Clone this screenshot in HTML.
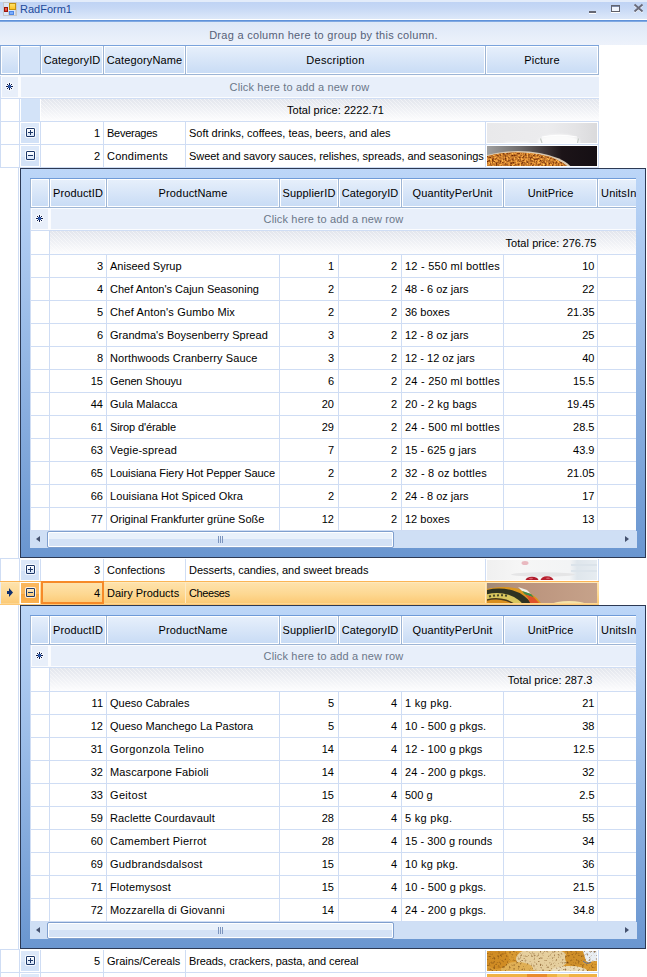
<!DOCTYPE html><html><head><meta charset="utf-8"><title>RadForm1</title><style>
*{box-sizing:border-box;margin:0;padding:0}
html,body{width:647px;height:977px;overflow:hidden;background:#fff}
body{position:relative;font-family:"Liberation Sans",sans-serif;font-size:11px;color:#000;line-height:13px}
.a{position:absolute}
.t{position:absolute;white-space:nowrap;height:13px;line-height:13px}
.r{text-align:right}
.c{text-align:center}
.title{left:0;top:0;width:647px;height:20px;background:linear-gradient(#e3ecfa 0,#e3ecfa 2px,#bfd3f4 2px,#c6d8f5 8px,#dde8f9 19px,#fff 19px,#fff 20px)}
.tline{left:0;top:20px;width:647px;height:2px;background:linear-gradient(#5f92d9 0,#5f92d9 1px,#80a9e2 1px,#80a9e2 2px)}
.gp{left:0;top:22px;width:647px;height:23px;background:linear-gradient(#dde8f7,#edf2fb)}
.hc{position:absolute;background:linear-gradient(#e6effb,#c9dcf5);border:1px solid #fff}
.hl{position:absolute;background:#9db5d5}
.gl{position:absolute;background:#cfddf4}
.child{position:absolute;left:20px;width:626px;border:1px solid #2c3954;background:linear-gradient(#bcd6f8,#6a96d0)}
.inner{position:absolute;left:9px;top:9px;width:606px;background:#fff;overflow:hidden}
.hatch{position:absolute;background-image:repeating-linear-gradient(45deg,rgba(255,255,255,.45) 0,rgba(255,255,255,.45) 1px,rgba(255,255,255,0) 1px,rgba(255,255,255,0) 2.83px),linear-gradient(#e3e6ed,#fdfdfe)}
.nr{position:absolute;background:#e8effa;border:1px solid #fbfcfe}
.exp{position:absolute;width:18px;height:20px;background:linear-gradient(#dce8f9 0,#dce8f9 55%,#d3e2f7 55%,#d3e2f7 100%)}
.box{position:absolute;width:9px;height:9px;border:1px solid #1d3767;border-radius:1px;background:linear-gradient(#fff,#d6e4f8);box-shadow:0 0 0 1px rgba(255,255,255,.8)}
.box i{position:absolute;left:1px;top:3px;width:5px;height:1px;background:#1d3767}
.box b{position:absolute;left:3px;top:1px;width:1px;height:5px;background:#1d3767}
.sb{position:absolute;left:0;width:607px;height:17px;background:#cfdff5}
.thumb{position:absolute;left:17px;top:0;width:347px;height:17px;border:1px solid #7f9fce;border-radius:2px;background:linear-gradient(#e9f1fb 0,#e9f1fb 45%,#d4e2f6 45%,#d4e2f6 100%);box-shadow:inset 0 0 0 1px #fff}
.grip{position:absolute;top:5px;width:1px;height:7px;background:#7c94bd}
.al{position:absolute;width:0;height:0;border:3.5px solid transparent;border-left:0;border-right:4px solid #44516e}
.ar{position:absolute;width:0;height:0;border:3.5px solid transparent;border-right:0;border-left:4px solid #44516e}
.sel{position:absolute;background:linear-gradient(#fee3ae,#fbc467)}
</style></head><body>
<div class="a title"></div><div class="a tline"></div><div class="a gp"></div>
<svg class="a" style="left:3px;top:2px" width="14" height="14" viewBox="0 0 14 14"><defs><linearGradient id="iy" x1="0" y1="0" x2="0" y2="1"><stop offset="0" stop-color="#ffe46e"/><stop offset="1" stop-color="#ffc21f"/></linearGradient></defs><rect x="0.5" y="0.5" width="13" height="13" fill="#dbe6f8" stroke="#c6c7c9"/><path d="M5.5 9 V13 M12.5 8 V13 M1 5.5 H5" stroke="#cdced2" fill="none"/><rect x="1.5" y="5.5" width="3" height="4" fill="#e0402c" stroke="#9a140c"/><rect x="2.5" y="6" width="1" height="2" fill="#f08070"/><rect x="6.5" y="1.5" width="6" height="6" fill="url(#iy)" stroke="#c4920e"/><rect x="6" y="9" width="5" height="4" fill="#4b86e6"/><rect x="7" y="10" width="3" height="2" fill="#7daefc"/></svg>
<div class="t " style="left:20px;top:3px;width:80px;color:#1d4a9c">RadForm1</div>
<div class="a" style="left:589px;top:11px;width:7px;height:2px;background:#666874"></div>
<div class="a" style="left:589px;top:13px;width:7px;height:1px;background:#fff"></div>
<svg class="a" style="left:611px;top:5px" width="9" height="8" viewBox="0 0 9 8"><rect x="0" y="7" width="9" height="1" fill="#fff"/><rect x="0" y="0" width="9" height="7" fill="#62646f"/><rect x="1" y="1" width="7" height="1" fill="#7c8aa8"/><rect x="1" y="2" width="7" height="3" fill="#f1f5fc"/><rect x="1" y="5" width="7" height="1" fill="#fff"/><rect x="0" y="6" width="9" height="1" fill="#5e5f68"/><rect x="1" y="5" width="7" height="1" fill="#f1f5fc"/></svg>
<svg class="a" style="left:633px;top:3px" width="11" height="11" viewBox="0 0 11 11"><path d="M1.5 2.5 L9.5 9.5 M9.5 2.5 L1.5 9.5" stroke="#fff" stroke-width="1.6" fill="none"/><path d="M1.5 1.5 L9.5 8.5 M9.5 1.5 L1.5 8.5" stroke="#696b7b" stroke-width="1.9" fill="none"/></svg>
<div class="t c" style="left:0px;top:29px;width:647px;color:#566178;letter-spacing:.285px">Drag a column here to group by this column.</div>
<div class="a" style="left:598px;top:45px;width:49px;height:932px;background:#fff"></div>
<div class="a" style="left:0px;top:45px;width:599px;height:31px;background:#fff"></div>
<div class="a" style="left:0px;top:45px;width:599px;height:1px;background:#7aa3dc"></div>
<div class="hl" style="left:0px;top:74px;width:599px;height:1px;"></div>
<div class="hl" style="left:0px;top:46px;width:1px;height:28px;"></div>
<div class="hc" style="left:1px;top:46px;width:18px;height:28px;"></div>
<div class="hl" style="left:19px;top:46px;width:1px;height:28px;"></div>
<div class="hc" style="left:20px;top:46px;width:20px;height:28px;background:#d3e3f8;border-color:#d3e3f8;border-top-color:#fff"></div>
<div class="hl" style="left:40px;top:46px;width:1px;height:28px;"></div>
<div class="hc" style="left:41px;top:46px;width:62px;height:28px;"></div>
<div class="hl" style="left:103px;top:46px;width:1px;height:28px;"></div>
<div class="hc" style="left:104px;top:46px;width:81px;height:28px;"></div>
<div class="hl" style="left:185px;top:46px;width:1px;height:28px;"></div>
<div class="hc" style="left:186px;top:46px;width:299px;height:28px;"></div>
<div class="hl" style="left:485px;top:46px;width:1px;height:28px;"></div>
<div class="hc" style="left:486px;top:46px;width:112px;height:28px;"></div>
<div class="hl" style="left:598px;top:46px;width:1px;height:28px;"></div>
<div class="t c" style="left:41px;top:54px;width:62px;;letter-spacing:0.111px;">CategoryID</div>
<div class="t c" style="left:104px;top:54px;width:81px;;letter-spacing:0.136px;">CategoryName</div>
<div class="t c" style="left:186px;top:54px;width:299px;;letter-spacing:0.300px;">Description</div>
<div class="t c" style="left:486px;top:54px;width:112px;;letter-spacing:0.167px;">Picture</div>
<div class="a" style="left:1px;top:75px;width:598px;height:23px;background:#fbfcfe"></div>
<div class="nr" style="left:1px;top:76px;width:18px;height:22px;"></div>
<div class="nr" style="left:20px;top:76px;width:579px;height:22px;border-right:0"></div>
<div class="gl" style="left:0px;top:76px;width:1px;height:901px;"></div>
<div class="gl" style="left:19px;top:98px;width:1px;height:879px;"></div>
<div class="gl" style="left:0px;top:98px;width:599px;height:1px;"></div>
<div class="t c" style="left:0px;top:81px;width:599px;color:#6b7789;letter-spacing:0.154px;">Click here to add a new row</div>
<svg class="a" style="left:6px;top:83px" width="7" height="7" viewBox="0 0 7 7" overflow="visible"><circle cx="3.5" cy="3.5" r="4.2" fill="#fff" opacity=".7"/><path d="M3.5 0V7M0 3.5H7M1 1L6 6M6 1L1 6" stroke="#121e4a" stroke-width="1" fill="none"/><rect x="2" y="2" width="3" height="3" rx="1" fill="#2a58ae"/></svg>
<div class="a" style="left:21px;top:99px;width:19px;height:22px;background:#d3e3f8"></div>
<div class="hatch" style="left:41px;top:99px;width:558px;height:22px;"></div>
<div class="gl" style="left:598px;top:121px;width:1px;height:856px;"></div>
<div class="gl" style="left:0px;top:121px;width:599px;height:1px;"></div>
<div class="t c" style="left:186px;top:104px;width:299px;;letter-spacing:0.053px;">Total price: 2222.71</div>
<div class="exp" style="left:21px;top:123px;width:18px;height:20px;"></div>
<div class="gl" style="left:40px;top:122px;width:1px;height:22px;"></div>
<div class="gl" style="left:103px;top:122px;width:1px;height:22px;"></div>
<div class="gl" style="left:185px;top:122px;width:1px;height:22px;"></div>
<div class="gl" style="left:485px;top:122px;width:1px;height:22px;"></div>
<div class="gl" style="left:0px;top:144px;width:599px;height:1px;"></div>
<div class="box" style="left:26px;top:128px;width:9px;height:9px;"><i></i><b></b></div>
<div class="t r" style="left:41px;top:127px;width:59px;">1</div>
<div class="t " style="left:107px;top:127px;width:78px;;letter-spacing:-0.250px;">Beverages</div>
<div class="t " style="left:189px;top:127px;width:296px;">Soft drinks, coffees, teas, beers, and ales</div>
<div class="exp" style="left:21px;top:146px;width:18px;height:20px;"></div>
<div class="gl" style="left:40px;top:145px;width:1px;height:22px;"></div>
<div class="gl" style="left:103px;top:145px;width:1px;height:22px;"></div>
<div class="gl" style="left:185px;top:145px;width:1px;height:22px;"></div>
<div class="gl" style="left:485px;top:145px;width:1px;height:22px;"></div>
<div class="gl" style="left:0px;top:167px;width:599px;height:1px;"></div>
<div class="box" style="left:26px;top:151px;width:9px;height:9px;"><i></i></div>
<div class="t r" style="left:41px;top:150px;width:59px;">2</div>
<div class="t " style="left:107px;top:150px;width:78px;;letter-spacing:0.222px;">Condiments</div>
<div class="t " style="left:189px;top:150px;width:296px;;letter-spacing:-0.053px;">Sweet and savory sauces, relishes, spreads, and seasonings</div>
<div class="gl" style="left:0px;top:558px;width:20px;height:1px;"></div>
<div class="gl" style="left:0px;top:949px;width:20px;height:1px;"></div>
<div class="exp" style="left:21px;top:560px;width:18px;height:20px;"></div>
<div class="gl" style="left:40px;top:559px;width:1px;height:22px;"></div>
<div class="gl" style="left:103px;top:559px;width:1px;height:22px;"></div>
<div class="gl" style="left:185px;top:559px;width:1px;height:22px;"></div>
<div class="gl" style="left:485px;top:559px;width:1px;height:22px;"></div>
<div class="gl" style="left:0px;top:581px;width:599px;height:1px;"></div>
<div class="box" style="left:26px;top:565px;width:9px;height:9px;"><i></i><b></b></div>
<div class="t r" style="left:41px;top:564px;width:59px;">3</div>
<div class="t " style="left:107px;top:564px;width:78px;">Confections</div>
<div class="t " style="left:189px;top:564px;width:296px;;letter-spacing:-0.029px;">Desserts, candies, and sweet breads</div>
<div class="a" style="left:0px;top:581px;width:599px;height:1px;background:#fbb555"></div>
<div class="a" style="left:0px;top:604px;width:599px;height:1px;background:#fcc876"></div>
<div class="a" style="left:0px;top:582px;width:599px;height:22px;background:linear-gradient(#fff0cc 0,#fee2ab 1px,#fdd892 12px,#fcca76 21px,#fde3b0 22px)"></div>
<div class="a" style="left:19px;top:582px;width:1px;height:22px;background:#fde9c2"></div>
<div class="a" style="left:20px;top:582px;width:20px;height:22px;background:linear-gradient(#fbb75d 0,#fbb75d 55%,#f9a53c 55%,#fbb252 100%);border:1px solid #fff"></div>
<div class="a" style="left:41px;top:581px;width:63px;height:23px;border:2px solid #f68a28"></div>
<div class="a" style="left:185px;top:583px;width:1px;height:20px;background:#fde9c2"></div>
<div class="a" style="left:485px;top:583px;width:1px;height:20px;background:#fde9c2"></div>
<svg class="a" style="left:7px;top:588px" width="6" height="9" viewBox="0 0 6 9"><path d="M2 0 L6 4.5 L2 9 Z M0 3 H3 V6 H0 Z" fill="#10306e"/></svg>
<div class="a" style="left:0px;top:582px;width:1px;height:22px;background:#e4ecf8"></div>
<div class="box" style="left:26px;top:588px;width:9px;height:9px;background:linear-gradient(#fde9c4,#fbc977);"><i></i></div>
<div class="t r" style="left:41px;top:587px;width:59px;">4</div>
<div class="t " style="left:107px;top:587px;width:78px;">Dairy Products</div>
<div class="t " style="left:189px;top:587px;width:296px;;letter-spacing:-0.417px;">Cheeses</div>
<div class="exp" style="left:21px;top:951px;width:18px;height:20px;"></div>
<div class="gl" style="left:40px;top:950px;width:1px;height:22px;"></div>
<div class="gl" style="left:103px;top:950px;width:1px;height:22px;"></div>
<div class="gl" style="left:185px;top:950px;width:1px;height:22px;"></div>
<div class="gl" style="left:485px;top:950px;width:1px;height:22px;"></div>
<div class="gl" style="left:0px;top:972px;width:599px;height:1px;"></div>
<div class="box" style="left:26px;top:956px;width:9px;height:9px;"><i></i><b></b></div>
<div class="t r" style="left:41px;top:955px;width:59px;">5</div>
<div class="t " style="left:107px;top:955px;width:78px;">Grains/Cereals</div>
<div class="t " style="left:189px;top:955px;width:296px;;letter-spacing:-0.103px;">Breads, crackers, pasta, and cereal</div>
<div class="a" style="left:21px;top:974px;width:18px;height:3px;background:#dde9f9"></div>
<div class="gl" style="left:40px;top:973px;width:1px;height:4px;"></div>
<div class="gl" style="left:103px;top:973px;width:1px;height:4px;"></div>
<div class="gl" style="left:185px;top:973px;width:1px;height:4px;"></div>
<div class="gl" style="left:485px;top:973px;width:1px;height:4px;"></div>
<svg class="a" width="0" height="0" style="left:0;top:0"><defs><filter id="fsp" color-interpolation-filters="sRGB" x="0" y="0" width="100%" height="100%"><feTurbulence type="fractalNoise" baseFrequency="0.55" numOctaves="2" seed="4"/><feColorMatrix type="matrix" values="1.1 0 0 0 0.22  1.0 0 0 0 -0.03  0.5 0 0 0 -0.08  0 0 0 0 1"/><feComposite in2="SourceGraphic" operator="in"/></filter><filter id="fcr" color-interpolation-filters="sRGB" x="0" y="0" width="100%" height="100%"><feTurbulence type="fractalNoise" baseFrequency="0.45" numOctaves="2" seed="9"/><feColorMatrix type="matrix" values="0 0 0 0 0.42  0 0 0 0 0.24  0 0 0 0 0.05  2.4 0 0 0 -1.3"/><feComposite in2="SourceGraphic" operator="in"/></filter><linearGradient id="p1" x1="0" x2="1"><stop offset="0" stop-color="#e9e9eb"/><stop offset=".55" stop-color="#ececee"/><stop offset=".8" stop-color="#e4e4e6"/><stop offset="1" stop-color="#dadadc"/></linearGradient><linearGradient id="p2" x1="0" x2="1"><stop offset="0" stop-color="#a0a0a0"/><stop offset=".3" stop-color="#6e6b6b"/><stop offset=".55" stop-color="#3a3234"/><stop offset=".68" stop-color="#1c1418"/><stop offset="1" stop-color="#150f14"/></linearGradient><linearGradient id="p3" x1="0" x2="1"><stop offset="0" stop-color="#f0f0f0"/><stop offset=".3" stop-color="#f6f6f6"/><stop offset=".75" stop-color="#f3f4f5"/><stop offset=".82" stop-color="#dfe6ec"/><stop offset="1" stop-color="#e6ecf1"/></linearGradient></defs></svg>
<svg class="a" style="left:487px;top:123px" width="110" height="20" viewBox="0 0 110 20"><defs><filter id="fb" x="-20%" y="-50%" width="140%" height="200%"><feGaussianBlur stdDeviation="1.1"/></filter></defs><rect width="110" height="20" fill="url(#p1)"/><ellipse cx="72" cy="19" rx="21" ry="7.5" fill="#fbfbfb" filter="url(#fb)"/><ellipse cx="30" cy="20.5" rx="13" ry="1.6" fill="#f8f8f8" filter="url(#fb)"/><path d="M53.5 15.5 L55 20 M91.5 15.5 L90.5 20" stroke="#b9c0ba" stroke-width="1.2" fill="none" opacity=".8"/><path d="M55 14 Q72 10.5 90 14" stroke="#fff" stroke-width="1.2" fill="none" opacity=".9"/></svg>
<svg class="a" style="left:487px;top:146px" width="110" height="20" viewBox="0 0 110 20"><rect width="110" height="20" fill="url(#p2)"/><ellipse cx="31" cy="30" rx="57" ry="25" fill="#d9c9b2"/><ellipse cx="30" cy="31" rx="56" ry="24.5" fill="#c8761e"/><ellipse cx="30" cy="31" rx="56" ry="24.5" fill="#c8761e" filter="url(#fsp)"/></svg>
<svg class="a" style="left:487px;top:560px" width="110" height="20" viewBox="0 0 110 20"><rect width="110" height="20" fill="url(#p3)"/><rect x="84" y="4" width="26" height="2" fill="#dbe3ea"/><rect x="84" y="10" width="26" height="2" fill="#dce4eb"/><ellipse cx="56" cy="14.5" rx="32" ry="2.2" fill="#e5e5e6"/><ellipse cx="38" cy="3" rx="3.5" ry="2" fill="#e9b9c0"/><ellipse cx="45" cy="20.5" rx="6.5" ry="3.8" fill="#b01c2c"/><ellipse cx="60" cy="20.5" rx="6.5" ry="4.2" fill="#b8202f"/><ellipse cx="44" cy="18.6" rx="2" ry=".8" fill="#d8606c"/><ellipse cx="61" cy="18.2" rx="2" ry=".8" fill="#d8606c"/></svg>
<svg class="a" style="left:487px;top:583px" width="110" height="20" viewBox="0 0 110 20"><defs><linearGradient id="p4" x1="0" x2="1"><stop offset="0" stop-color="#a18977"/><stop offset=".35" stop-color="#bb947d"/><stop offset="1" stop-color="#c6a28a"/></linearGradient></defs><rect width="110" height="20" fill="url(#p4)"/><ellipse cx="16" cy="28" rx="40" ry="24" fill="#dc961f"/><ellipse cx="12" cy="30" rx="35" ry="24.5" fill="#2f3322"/><ellipse cx="10" cy="33" rx="30" ry="23" fill="#d9c75e"/><path d="M2 13.5 l2 -.5 M6 12.8 l2 -.4 M10 12.4 l2 -.2 M14 12.3 l2 0 M18 12.5 l2 .3" stroke="#4a4a28" stroke-width="2" fill="none"/><ellipse cx="9" cy="36" rx="27" ry="21" fill="#4a3a1a"/><ellipse cx="9" cy="37" rx="26" ry="20.5" fill="#d98f1e"/><path d="M31 4 L40 7 L44 11 L35 8 Z" fill="#f1f0e8"/><path d="M35 8 L44 11 L47 14.5 L38 11.5 Z" fill="#3f8a4c"/><path d="M38 11.5 L47 14.5 L52 20 L43 20 L41 15 Z" fill="#e0522a"/><ellipse cx="82" cy="21" rx="16" ry="3" fill="#f5e3a8"/></svg>
<svg class="a" style="left:487px;top:951px" width="110" height="20" viewBox="0 0 110 20"><rect width="110" height="20" fill="#d99a32"/><ellipse cx="55" cy="8" rx="26" ry="12" fill="#e6cf9e"/><ellipse cx="30" cy="18" rx="16" ry="7" fill="#e0b056"/><ellipse cx="82" cy="20" rx="18" ry="5" fill="#ecdcb8"/><ellipse cx="10" cy="8" rx="12" ry="10" fill="#d08c24"/><ellipse cx="88" cy="7" rx="10" ry="8" fill="#cf8f2a"/><path d="M96 0 H110 V10 Q104 13 99 10 Z" fill="#e9eef3"/><ellipse cx="108" cy="16" rx="9" ry="6" fill="#d99a32"/><path d="M96 10 Q100 14 104 11" stroke="#5c6f96" fill="none" stroke-width="1"/><rect width="110" height="20" fill="#000" filter="url(#fcr)"/></svg>
<svg class="a" style="left:487px;top:974px" width="110" height="3" viewBox="0 0 110 3"><rect width="110" height="3" fill="#f0b244"/><rect x="40" width="20" height="3" fill="#e98b2c"/><rect x="70" width="12" height="3" fill="#f6cc6a"/></svg>
<div class="a" style="left:0px;top:168px;width:647px;height:390px;background:#fff"></div>
<div class="gl" style="left:18px;top:168px;width:1px;height:390px;"></div>
<div class="a" style="left:20px;top:168px;width:627px;height:391px;background:#fff"></div>
<div class="child" style="top:168px;height:390px">
<div class="inner" style="height:370px">
<div class="a" style="left:0px;top:0px;width:607px;height:1px;background:#6f9bd8"></div>
<div class="hl" style="left:0px;top:29px;width:607px;height:1px;"></div>
<div class="hl" style="left:0px;top:1px;width:1px;height:28px;"></div>
<div class="hc" style="left:1px;top:1px;width:18px;height:28px;"></div>
<div class="hl" style="left:19px;top:1px;width:1px;height:28px;"></div>
<div class="hc" style="left:20px;top:1px;width:56px;height:28px;"></div>
<div class="hl" style="left:76px;top:1px;width:1px;height:28px;"></div>
<div class="hc" style="left:77px;top:1px;width:172px;height:28px;"></div>
<div class="hl" style="left:249px;top:1px;width:1px;height:28px;"></div>
<div class="hc" style="left:250px;top:1px;width:58px;height:28px;"></div>
<div class="hl" style="left:308px;top:1px;width:1px;height:28px;"></div>
<div class="hc" style="left:309px;top:1px;width:62px;height:28px;"></div>
<div class="hl" style="left:371px;top:1px;width:1px;height:28px;"></div>
<div class="hc" style="left:372px;top:1px;width:101px;height:28px;"></div>
<div class="hl" style="left:473px;top:1px;width:1px;height:28px;"></div>
<div class="hc" style="left:474px;top:1px;width:93px;height:28px;"></div>
<div class="hl" style="left:567px;top:1px;width:1px;height:28px;"></div>
<div class="hc" style="left:568px;top:1px;width:39px;height:28px;"></div>
<div class="hl" style="left:607px;top:1px;width:1px;height:28px;"></div>
<div class="t c" style="left:20px;top:9px;width:56px;;letter-spacing:0.125px;">ProductID</div>
<div class="t c" style="left:77px;top:9px;width:172px;;letter-spacing:0.150px;">ProductName</div>
<div class="t c" style="left:250px;top:9px;width:58px;;letter-spacing:0.167px;">SupplierID</div>
<div class="t c" style="left:309px;top:9px;width:62px;;letter-spacing:0.111px;">CategoryID</div>
<div class="t c" style="left:372px;top:9px;width:101px;;letter-spacing:0.143px;">QuantityPerUnit</div>
<div class="t c" style="left:474px;top:9px;width:93px;;letter-spacing:0.125px;">UnitPrice</div>
<div class="t " style="left:571px;top:9px;width:35px;overflow:hidden;letter-spacing:.2px">UnitsInStock</div>
<div class="a" style="left:1px;top:30px;width:606px;height:22px;background:#fbfcfe"></div>
<div class="nr" style="left:1px;top:30px;width:18px;height:22px;"></div>
<div class="nr" style="left:20px;top:30px;width:587px;height:22px;"></div>
<div class="gl" style="left:0px;top:52px;width:607px;height:1px;"></div>
<div class="t c" style="left:20px;top:35px;width:567px;color:#6b7789;letter-spacing:0.154px;">Click here to add a new row</div>
<svg class="a" style="left:6px;top:37px" width="7" height="7" viewBox="0 0 7 7" overflow="visible"><circle cx="3.5" cy="3.5" r="4.2" fill="#fff" opacity=".7"/><path d="M3.5 0V7M0 3.5H7M1 1L6 6M6 1L1 6" stroke="#121e4a" stroke-width="1" fill="none"/><rect x="2" y="2" width="3" height="3" rx="1" fill="#2a58ae"/></svg>
<div class="hatch" style="left:20px;top:53px;width:587px;height:23px;"></div>
<div class="gl" style="left:0px;top:76px;width:607px;height:1px;"></div>
<div class="t r" style="left:454.5px;top:59px;width:112px;;letter-spacing:0.056px;">Total price: 276.75</div>
<div class="gl" style="left:0px;top:30px;width:1px;height:323px;"></div>
<div class="gl" style="left:19px;top:52px;width:1px;height:301px;"></div>
<div class="gl" style="left:76px;top:77px;width:1px;height:276px;"></div>
<div class="gl" style="left:249px;top:77px;width:1px;height:276px;"></div>
<div class="gl" style="left:308px;top:77px;width:1px;height:276px;"></div>
<div class="gl" style="left:371px;top:77px;width:1px;height:276px;"></div>
<div class="gl" style="left:473px;top:77px;width:1px;height:276px;"></div>
<div class="gl" style="left:567px;top:77px;width:1px;height:276px;"></div>
<div class="gl" style="left:0px;top:99px;width:607px;height:1px;"></div>
<div class="t r" style="left:20px;top:82px;width:53px;">3</div>
<div class="t " style="left:80px;top:82px;width:170px;">Aniseed Syrup</div>
<div class="t r" style="left:250px;top:82px;width:54px;">1</div>
<div class="t r" style="left:309px;top:82px;width:58px;">2</div>
<div class="t " style="left:375px;top:82px;width:100px;;letter-spacing:0.239px;">12 - 550 ml bottles</div>
<div class="t r" style="left:474px;top:82px;width:90.5px;">10</div>
<div class="gl" style="left:0px;top:122px;width:607px;height:1px;"></div>
<div class="t r" style="left:20px;top:105px;width:53px;">4</div>
<div class="t " style="left:80px;top:105px;width:170px;">Chef Anton's Cajun Seasoning</div>
<div class="t r" style="left:250px;top:105px;width:54px;">2</div>
<div class="t r" style="left:309px;top:105px;width:58px;">2</div>
<div class="t " style="left:375px;top:105px;width:100px;">48 - 6 oz jars</div>
<div class="t r" style="left:474px;top:105px;width:90.5px;">22</div>
<div class="gl" style="left:0px;top:145px;width:607px;height:1px;"></div>
<div class="t r" style="left:20px;top:128px;width:53px;">5</div>
<div class="t " style="left:80px;top:128px;width:170px;;letter-spacing:0.167px;">Chef Anton's Gumbo Mix</div>
<div class="t r" style="left:250px;top:128px;width:54px;">2</div>
<div class="t r" style="left:309px;top:128px;width:58px;">2</div>
<div class="t " style="left:375px;top:128px;width:100px;">36 boxes</div>
<div class="t r" style="left:474px;top:128px;width:90.5px;">21.35</div>
<div class="gl" style="left:0px;top:168px;width:607px;height:1px;"></div>
<div class="t r" style="left:20px;top:151px;width:53px;">6</div>
<div class="t " style="left:80px;top:151px;width:170px;;letter-spacing:0.037px;">Grandma's Boysenberry Spread</div>
<div class="t r" style="left:250px;top:151px;width:54px;">3</div>
<div class="t r" style="left:309px;top:151px;width:58px;">2</div>
<div class="t " style="left:375px;top:151px;width:100px;">12 - 8 oz jars</div>
<div class="t r" style="left:474px;top:151px;width:90.5px;">25</div>
<div class="gl" style="left:0px;top:191px;width:607px;height:1px;"></div>
<div class="t r" style="left:20px;top:174px;width:53px;">8</div>
<div class="t " style="left:80px;top:174px;width:170px;;letter-spacing:0.100px;">Northwoods Cranberry Sauce</div>
<div class="t r" style="left:250px;top:174px;width:54px;">3</div>
<div class="t r" style="left:309px;top:174px;width:58px;">2</div>
<div class="t " style="left:375px;top:174px;width:100px;">12 - 12 oz jars</div>
<div class="t r" style="left:474px;top:174px;width:90.5px;">40</div>
<div class="gl" style="left:0px;top:214px;width:607px;height:1px;"></div>
<div class="t r" style="left:20px;top:197px;width:53px;">15</div>
<div class="t " style="left:80px;top:197px;width:170px;;letter-spacing:-0.136px;">Genen Shouyu</div>
<div class="t r" style="left:250px;top:197px;width:54px;">6</div>
<div class="t r" style="left:309px;top:197px;width:58px;">2</div>
<div class="t " style="left:375px;top:197px;width:100px;;letter-spacing:0.239px;">24 - 250 ml bottles</div>
<div class="t r" style="left:474px;top:197px;width:90.5px;">15.5</div>
<div class="gl" style="left:0px;top:237px;width:607px;height:1px;"></div>
<div class="t r" style="left:20px;top:220px;width:53px;">44</div>
<div class="t " style="left:80px;top:220px;width:170px;">Gula Malacca</div>
<div class="t r" style="left:250px;top:220px;width:54px;">20</div>
<div class="t r" style="left:309px;top:220px;width:58px;">2</div>
<div class="t " style="left:375px;top:220px;width:100px;;letter-spacing:0.154px;">20 - 2 kg bags</div>
<div class="t r" style="left:474px;top:220px;width:90.5px;">19.45</div>
<div class="gl" style="left:0px;top:260px;width:607px;height:1px;"></div>
<div class="t r" style="left:20px;top:243px;width:53px;">61</div>
<div class="t " style="left:80px;top:243px;width:170px;;letter-spacing:-0.115px;">Sirop d'érable</div>
<div class="t r" style="left:250px;top:243px;width:54px;">29</div>
<div class="t r" style="left:309px;top:243px;width:58px;">2</div>
<div class="t " style="left:375px;top:243px;width:100px;;letter-spacing:0.239px;">24 - 500 ml bottles</div>
<div class="t r" style="left:474px;top:243px;width:90.5px;">28.5</div>
<div class="gl" style="left:0px;top:283px;width:607px;height:1px;"></div>
<div class="t r" style="left:20px;top:266px;width:53px;">63</div>
<div class="t " style="left:80px;top:266px;width:170px;;letter-spacing:0.182px;">Vegie-spread</div>
<div class="t r" style="left:250px;top:266px;width:54px;">7</div>
<div class="t r" style="left:309px;top:266px;width:58px;">2</div>
<div class="t " style="left:375px;top:266px;width:100px;;letter-spacing:0.071px;">15 - 625 g jars</div>
<div class="t r" style="left:474px;top:266px;width:90.5px;">43.9</div>
<div class="gl" style="left:0px;top:306px;width:607px;height:1px;"></div>
<div class="t r" style="left:20px;top:289px;width:53px;">65</div>
<div class="t " style="left:80px;top:289px;width:170px;;letter-spacing:-0.081px;">Louisiana Fiery Hot Pepper Sauce</div>
<div class="t r" style="left:250px;top:289px;width:54px;">2</div>
<div class="t r" style="left:309px;top:289px;width:58px;">2</div>
<div class="t " style="left:375px;top:289px;width:100px;;letter-spacing:0.219px;">32 - 8 oz bottles</div>
<div class="t r" style="left:474px;top:289px;width:90.5px;">21.05</div>
<div class="gl" style="left:0px;top:329px;width:607px;height:1px;"></div>
<div class="t r" style="left:20px;top:312px;width:53px;">66</div>
<div class="t " style="left:80px;top:312px;width:170px;;letter-spacing:0.083px;">Louisiana Hot Spiced Okra</div>
<div class="t r" style="left:250px;top:312px;width:54px;">2</div>
<div class="t r" style="left:309px;top:312px;width:58px;">2</div>
<div class="t " style="left:375px;top:312px;width:100px;">24 - 8 oz jars</div>
<div class="t r" style="left:474px;top:312px;width:90.5px;">17</div>
<div class="gl" style="left:0px;top:352px;width:607px;height:1px;"></div>
<div class="t r" style="left:20px;top:335px;width:53px;">77</div>
<div class="t " style="left:80px;top:335px;width:170px;;letter-spacing:-0.033px;">Original Frankfurter grüne Soße</div>
<div class="t r" style="left:250px;top:335px;width:54px;">12</div>
<div class="t r" style="left:309px;top:335px;width:58px;">2</div>
<div class="t " style="left:375px;top:335px;width:100px;">12 boxes</div>
<div class="t r" style="left:474px;top:335px;width:90.5px;">13</div>
<div class="sb" style="top:353px"><div class="al" style="left:6px;top:5px"></div><div class="thumb"></div><div class="grip" style="left:188px"></div><div class="grip" style="left:190px"></div><div class="grip" style="left:192px"></div><div class="ar" style="left:595px;top:5px"></div></div>
</div>
<div class="a" style="left:615px;top:362px;width:1px;height:17px;background:#cfdff5"></div>
</div>
<div class="a" style="left:0px;top:605px;width:647px;height:344px;background:#fff"></div>
<div class="gl" style="left:18px;top:605px;width:1px;height:344px;"></div>
<div class="a" style="left:20px;top:605px;width:627px;height:345px;background:#fff"></div>
<div class="child" style="top:605px;height:344px">
<div class="inner" style="height:324px">
<div class="a" style="left:0px;top:0px;width:607px;height:1px;background:#6f9bd8"></div>
<div class="hl" style="left:0px;top:29px;width:607px;height:1px;"></div>
<div class="hl" style="left:0px;top:1px;width:1px;height:28px;"></div>
<div class="hc" style="left:1px;top:1px;width:18px;height:28px;"></div>
<div class="hl" style="left:19px;top:1px;width:1px;height:28px;"></div>
<div class="hc" style="left:20px;top:1px;width:56px;height:28px;"></div>
<div class="hl" style="left:76px;top:1px;width:1px;height:28px;"></div>
<div class="hc" style="left:77px;top:1px;width:172px;height:28px;"></div>
<div class="hl" style="left:249px;top:1px;width:1px;height:28px;"></div>
<div class="hc" style="left:250px;top:1px;width:58px;height:28px;"></div>
<div class="hl" style="left:308px;top:1px;width:1px;height:28px;"></div>
<div class="hc" style="left:309px;top:1px;width:62px;height:28px;"></div>
<div class="hl" style="left:371px;top:1px;width:1px;height:28px;"></div>
<div class="hc" style="left:372px;top:1px;width:101px;height:28px;"></div>
<div class="hl" style="left:473px;top:1px;width:1px;height:28px;"></div>
<div class="hc" style="left:474px;top:1px;width:93px;height:28px;"></div>
<div class="hl" style="left:567px;top:1px;width:1px;height:28px;"></div>
<div class="hc" style="left:568px;top:1px;width:39px;height:28px;"></div>
<div class="hl" style="left:607px;top:1px;width:1px;height:28px;"></div>
<div class="t c" style="left:20px;top:9px;width:56px;;letter-spacing:0.125px;">ProductID</div>
<div class="t c" style="left:77px;top:9px;width:172px;;letter-spacing:0.150px;">ProductName</div>
<div class="t c" style="left:250px;top:9px;width:58px;;letter-spacing:0.167px;">SupplierID</div>
<div class="t c" style="left:309px;top:9px;width:62px;;letter-spacing:0.111px;">CategoryID</div>
<div class="t c" style="left:372px;top:9px;width:101px;;letter-spacing:0.143px;">QuantityPerUnit</div>
<div class="t c" style="left:474px;top:9px;width:93px;;letter-spacing:0.125px;">UnitPrice</div>
<div class="t " style="left:571px;top:9px;width:35px;overflow:hidden;letter-spacing:.2px">UnitsInStock</div>
<div class="a" style="left:1px;top:30px;width:606px;height:22px;background:#fbfcfe"></div>
<div class="nr" style="left:1px;top:30px;width:18px;height:22px;"></div>
<div class="nr" style="left:20px;top:30px;width:587px;height:22px;"></div>
<div class="gl" style="left:0px;top:52px;width:607px;height:1px;"></div>
<div class="t c" style="left:20px;top:35px;width:567px;color:#6b7789;letter-spacing:0.154px;">Click here to add a new row</div>
<svg class="a" style="left:6px;top:37px" width="7" height="7" viewBox="0 0 7 7" overflow="visible"><circle cx="3.5" cy="3.5" r="4.2" fill="#fff" opacity=".7"/><path d="M3.5 0V7M0 3.5H7M1 1L6 6M6 1L1 6" stroke="#121e4a" stroke-width="1" fill="none"/><rect x="2" y="2" width="3" height="3" rx="1" fill="#2a58ae"/></svg>
<div class="hatch" style="left:20px;top:53px;width:587px;height:23px;"></div>
<div class="gl" style="left:0px;top:76px;width:607px;height:1px;"></div>
<div class="t r" style="left:450.5px;top:59px;width:112px;;letter-spacing:0.059px;">Total price: 287.3</div>
<div class="gl" style="left:0px;top:30px;width:1px;height:277px;"></div>
<div class="gl" style="left:19px;top:52px;width:1px;height:255px;"></div>
<div class="gl" style="left:76px;top:77px;width:1px;height:230px;"></div>
<div class="gl" style="left:249px;top:77px;width:1px;height:230px;"></div>
<div class="gl" style="left:308px;top:77px;width:1px;height:230px;"></div>
<div class="gl" style="left:371px;top:77px;width:1px;height:230px;"></div>
<div class="gl" style="left:473px;top:77px;width:1px;height:230px;"></div>
<div class="gl" style="left:567px;top:77px;width:1px;height:230px;"></div>
<div class="gl" style="left:0px;top:99px;width:607px;height:1px;"></div>
<div class="t r" style="left:20px;top:82px;width:53px;">11</div>
<div class="t " style="left:80px;top:82px;width:170px;">Queso Cabrales</div>
<div class="t r" style="left:250px;top:82px;width:54px;">5</div>
<div class="t r" style="left:309px;top:82px;width:58px;">4</div>
<div class="t " style="left:375px;top:82px;width:100px;;letter-spacing:0.287px;">1 kg pkg.</div>
<div class="t r" style="left:474px;top:82px;width:90.5px;">21</div>
<div class="gl" style="left:0px;top:122px;width:607px;height:1px;"></div>
<div class="t r" style="left:20px;top:105px;width:53px;">12</div>
<div class="t " style="left:80px;top:105px;width:170px;">Queso Manchego La Pastora</div>
<div class="t r" style="left:250px;top:105px;width:54px;">5</div>
<div class="t r" style="left:309px;top:105px;width:58px;">4</div>
<div class="t " style="left:375px;top:105px;width:100px;;letter-spacing:0.153px;">10 - 500 g pkgs.</div>
<div class="t r" style="left:474px;top:105px;width:90.5px;">38</div>
<div class="gl" style="left:0px;top:145px;width:607px;height:1px;"></div>
<div class="t r" style="left:20px;top:128px;width:53px;">31</div>
<div class="t " style="left:80px;top:128px;width:170px;;letter-spacing:0.344px;">Gorgonzola Telino</div>
<div class="t r" style="left:250px;top:128px;width:54px;">14</div>
<div class="t r" style="left:309px;top:128px;width:58px;">4</div>
<div class="t " style="left:375px;top:128px;width:100px;;letter-spacing:0.107px;">12 - 100 g pkgs</div>
<div class="t r" style="left:474px;top:128px;width:90.5px;">12.5</div>
<div class="gl" style="left:0px;top:168px;width:607px;height:1px;"></div>
<div class="t r" style="left:20px;top:151px;width:53px;">32</div>
<div class="t " style="left:80px;top:151px;width:170px;;letter-spacing:0.147px;">Mascarpone Fabioli</div>
<div class="t r" style="left:250px;top:151px;width:54px;">14</div>
<div class="t r" style="left:309px;top:151px;width:58px;">4</div>
<div class="t " style="left:375px;top:151px;width:100px;;letter-spacing:0.153px;">24 - 200 g pkgs.</div>
<div class="t r" style="left:474px;top:151px;width:90.5px;">32</div>
<div class="gl" style="left:0px;top:191px;width:607px;height:1px;"></div>
<div class="t r" style="left:20px;top:174px;width:53px;">33</div>
<div class="t " style="left:80px;top:174px;width:170px;;letter-spacing:0.333px;">Geitost</div>
<div class="t r" style="left:250px;top:174px;width:54px;">15</div>
<div class="t r" style="left:309px;top:174px;width:58px;">4</div>
<div class="t " style="left:375px;top:174px;width:100px;">500 g</div>
<div class="t r" style="left:474px;top:174px;width:90.5px;">2.5</div>
<div class="gl" style="left:0px;top:214px;width:607px;height:1px;"></div>
<div class="t r" style="left:20px;top:197px;width:53px;">59</div>
<div class="t " style="left:80px;top:197px;width:170px;;letter-spacing:0.105px;">Raclette Courdavault</div>
<div class="t r" style="left:250px;top:197px;width:54px;">28</div>
<div class="t r" style="left:309px;top:197px;width:58px;">4</div>
<div class="t " style="left:375px;top:197px;width:100px;;letter-spacing:0.287px;">5 kg pkg.</div>
<div class="t r" style="left:474px;top:197px;width:90.5px;">55</div>
<div class="gl" style="left:0px;top:237px;width:607px;height:1px;"></div>
<div class="t r" style="left:20px;top:220px;width:53px;">60</div>
<div class="t " style="left:80px;top:220px;width:170px;;letter-spacing:0.219px;">Camembert Pierrot</div>
<div class="t r" style="left:250px;top:220px;width:54px;">28</div>
<div class="t r" style="left:309px;top:220px;width:58px;">4</div>
<div class="t " style="left:375px;top:220px;width:100px;;letter-spacing:0.062px;">15 - 300 g rounds</div>
<div class="t r" style="left:474px;top:220px;width:90.5px;">34</div>
<div class="gl" style="left:0px;top:260px;width:607px;height:1px;"></div>
<div class="t r" style="left:20px;top:243px;width:53px;">69</div>
<div class="t " style="left:80px;top:243px;width:170px;;letter-spacing:0.200px;">Gudbrandsdalsost</div>
<div class="t r" style="left:250px;top:243px;width:54px;">15</div>
<div class="t r" style="left:309px;top:243px;width:58px;">4</div>
<div class="t " style="left:375px;top:243px;width:100px;;letter-spacing:0.256px;">10 kg pkg.</div>
<div class="t r" style="left:474px;top:243px;width:90.5px;">36</div>
<div class="gl" style="left:0px;top:283px;width:607px;height:1px;"></div>
<div class="t r" style="left:20px;top:266px;width:53px;">71</div>
<div class="t " style="left:80px;top:266px;width:170px;;letter-spacing:0.150px;">Flotemysost</div>
<div class="t r" style="left:250px;top:266px;width:54px;">15</div>
<div class="t r" style="left:309px;top:266px;width:58px;">4</div>
<div class="t " style="left:375px;top:266px;width:100px;;letter-spacing:0.153px;">10 - 500 g pkgs.</div>
<div class="t r" style="left:474px;top:266px;width:90.5px;">21.5</div>
<div class="gl" style="left:0px;top:306px;width:607px;height:1px;"></div>
<div class="t r" style="left:20px;top:289px;width:53px;">72</div>
<div class="t " style="left:80px;top:289px;width:170px;;letter-spacing:0.167px;">Mozzarella di Giovanni</div>
<div class="t r" style="left:250px;top:289px;width:54px;">14</div>
<div class="t r" style="left:309px;top:289px;width:58px;">4</div>
<div class="t " style="left:375px;top:289px;width:100px;;letter-spacing:0.153px;">24 - 200 g pkgs.</div>
<div class="t r" style="left:474px;top:289px;width:90.5px;">34.8</div>
<div class="sb" style="top:307px"><div class="al" style="left:6px;top:5px"></div><div class="thumb"></div><div class="grip" style="left:188px"></div><div class="grip" style="left:190px"></div><div class="grip" style="left:192px"></div><div class="ar" style="left:595px;top:5px"></div></div>
</div>
<div class="a" style="left:615px;top:316px;width:1px;height:17px;background:#cfdff5"></div>
</div>
</body></html>
